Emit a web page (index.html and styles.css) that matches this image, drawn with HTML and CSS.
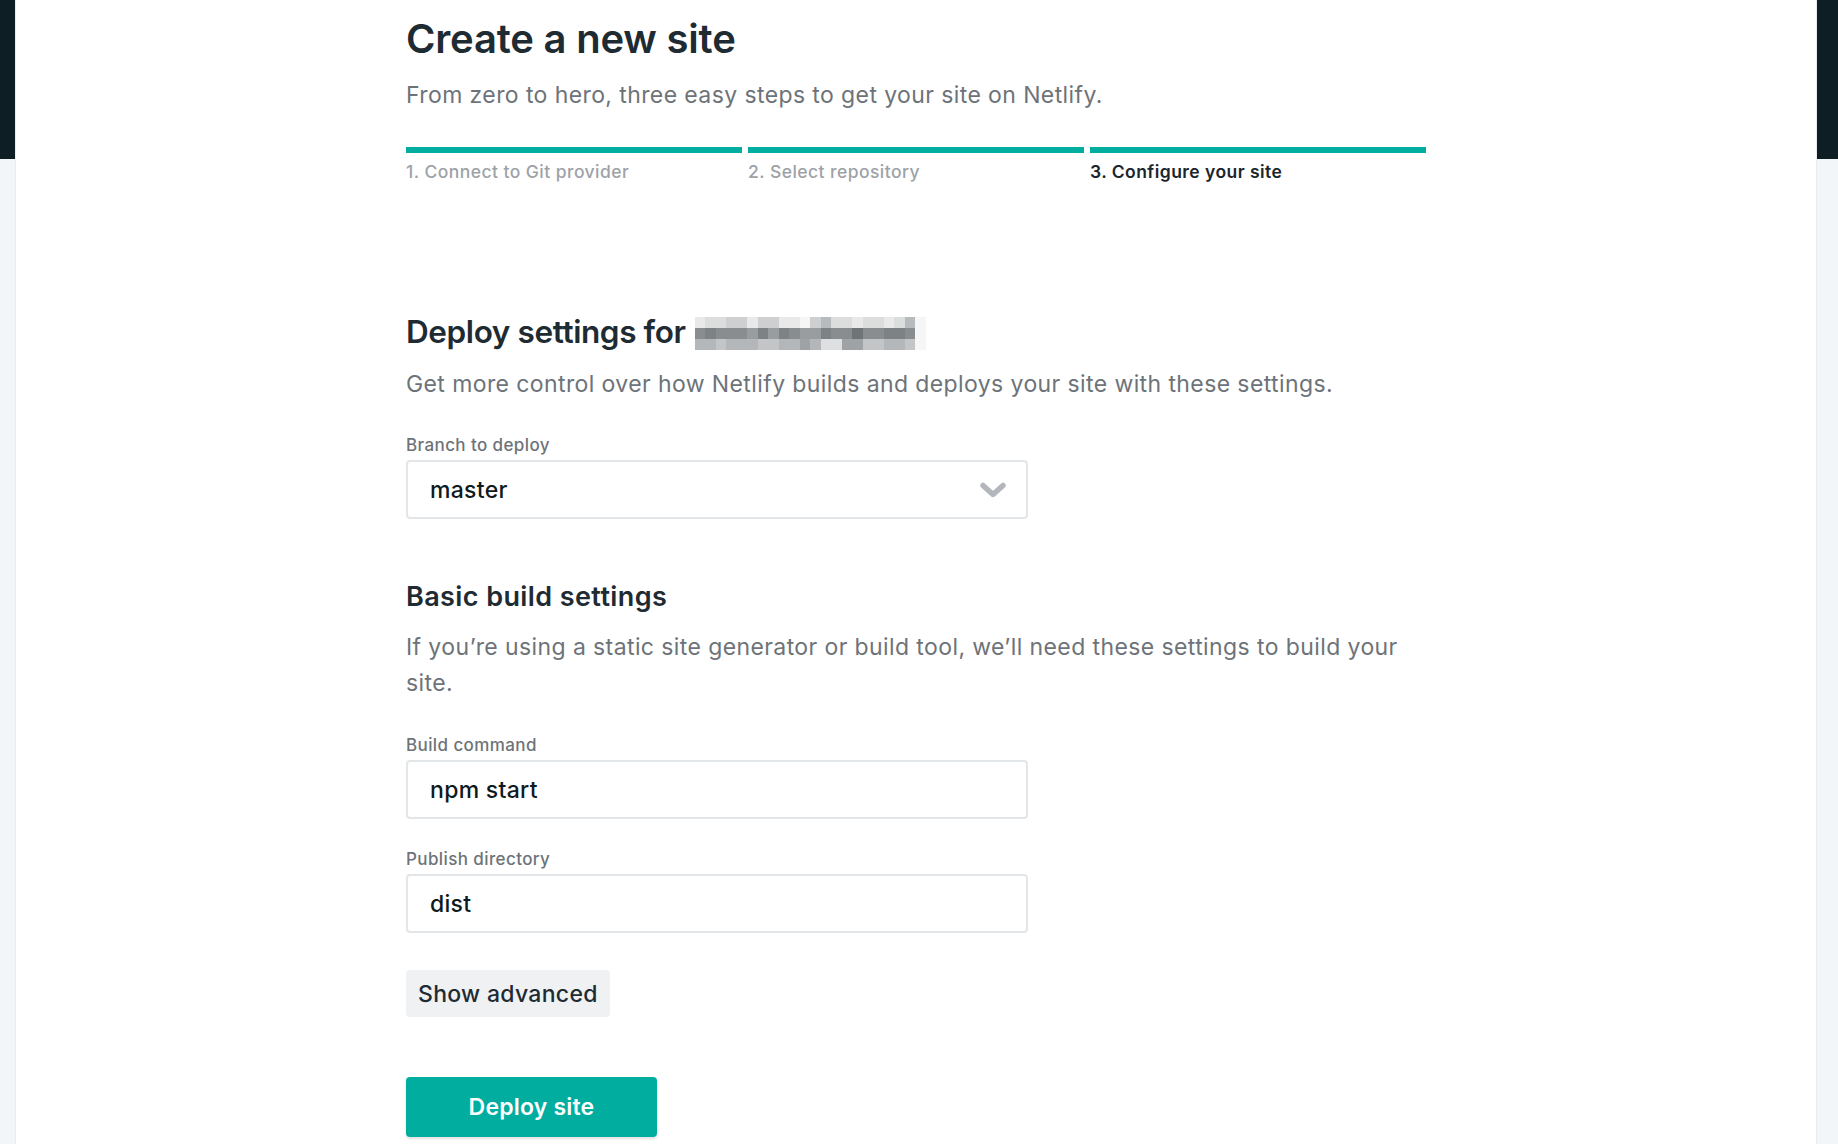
FILE: index.html
```html
<!DOCTYPE html>
<html lang="en">
<head>
<meta charset="utf-8">
<title>Create a new site</title>
<link rel="stylesheet" href="styles.css">
</head>
<body>
<div class="page">
  <div class="edge edge-left"></div>
  <main class="main">
    <div class="wrap">
      <h1 class="title">Create a new site</h1>
      <p class="lead">From zero to hero, three easy steps to get your site on Netlify.</p>

      <ol class="steps">
        <li class="step">1. Connect to Git provider</li>
        <li class="step">2. Select repository</li>
        <li class="step current">3. Configure your site</li>
      </ol>

      <section class="section deploy">
        <h2 class="h2">Deploy settings for <span class="mosaic" aria-hidden="true">
          <span class="row">
            <i class="g1"></i><i class="g2"></i><i class="g2"></i><i class="g3"></i><i class="g3"></i><i class="g1"></i><i class="g3"></i><i class="g3"></i><i class="g1"></i><i class="g1"></i><i class="g0"></i><i class="g3"></i><i class="g4"></i><i class="g2"></i><i class="g2"></i><i class="g1"></i><i class="g2"></i><i class="g2"></i><i class="g1"></i><i class="g2"></i><i class="g4"></i><i class="g0"></i>
          </span>
          <span class="row">
            <i class="d2"></i><i class="d1"></i><i class="d2"></i><i class="d2"></i><i class="d2"></i><i class="d3"></i><i class="d1"></i><i class="d3"></i><i class="d1"></i><i class="d2"></i><i class="d3"></i><i class="d3"></i><i class="d1"></i><i class="d2"></i><i class="d2"></i><i class="d0"></i><i class="d2"></i><i class="d2"></i><i class="d1"></i><i class="d1"></i><i class="d2"></i><i class="g0"></i>
          </span>
          <span class="row">
            <i class="m2"></i><i class="m2"></i><i class="m1"></i><i class="m2"></i><i class="m2"></i><i class="m2"></i><i class="m1"></i><i class="m1"></i><i class="m2"></i><i class="m2"></i><i class="m3"></i><i class="m2"></i><i class="m0"></i><i class="m0"></i><i class="m3"></i><i class="m3"></i><i class="m1"></i><i class="m1"></i><i class="m2"></i><i class="m2"></i><i class="m1"></i><i class="g0"></i>
          </span>
        </span></h2>
        <p class="desc">Get more control over how Netlify builds and deploys your site with these settings.</p>

        <div class="field">
          <label class="field-label">Branch to deploy</label>
          <div class="control select">
            <span class="value">master</span>
            <svg class="chevron" width="26" height="16" viewBox="0 0 26 16" aria-hidden="true">
              <path d="M3 3.5 L13 12.5 L23 3.5" fill="none" stroke="#b3b7bb" stroke-width="5.5" stroke-linecap="round" stroke-linejoin="round"/>
            </svg>
          </div>
        </div>
      </section>

      <section class="section build">
        <h3 class="h3">Basic build settings</h3>
        <p class="desc">If you’re using a static site generator or build tool, we’ll need these settings to build your site.</p>

        <div class="field">
          <label class="field-label">Build command</label>
          <div class="control"><span class="value">npm start</span></div>
        </div>

        <div class="field">
          <label class="field-label">Publish directory</label>
          <div class="control"><span class="value">dist</span></div>
        </div>

        <button class="btn btn-light" type="button">Show advanced</button>
      </section>

      <button class="btn btn-primary" type="button">Deploy site</button>
    </div>
  </main>
  <div class="edge edge-right"></div>
</div>
</body>
</html>
```

FILE: styles.css
```css
* { box-sizing: border-box; }

html, body {
  margin: 0;
  padding: 0;
  height: 100%;
}

body {
  font-family: Inter, "Noto Sans", "Liberation Sans", sans-serif;
  color: #1f2b33;
  background: #ffffff;
  overflow: hidden;
}

.page {
  display: flex;
  min-height: 1144px;
}

.edge {
  flex: 0 0 auto;
  background: linear-gradient(#0d1e25 0, #0d1e25 159px, #f3f6f8 159px, #f3f6f8 100%);
}

.edge-left {
  width: 16px;
  box-shadow: inset -1px 0 0 #e9edef;
}

.edge-right {
  width: 22px;
  box-shadow: inset 1px 0 0 #e9edef;
}

.main {
  flex: 1 1 auto;
  background: #ffffff;
}

.wrap {
  width: 1020px;
  margin: 0 auto;
  padding-top: 15px;
}

.title {
  margin: 0;
  font-size: 40px;
  line-height: 48px;
  font-weight: 600;
  letter-spacing: -0.2px;
  color: #1f2b33;
}

.lead {
  margin: 17px 0 0;
  font-size: 23px;
  line-height: 30px;
  letter-spacing: 0.4px;
  color: #6d7378;
  font-weight: 400;
}

.steps {
  list-style: none;
  margin: 37px 0 0;
  padding: 0;
  display: grid;
  grid-template-columns: repeat(3, 1fr);
  column-gap: 6px;
}

.step {
  border-top: 6px solid #00ad9f;
  padding-top: 8px;
  font-size: 17.5px;
  line-height: 22px;
  letter-spacing: 0.45px;
  font-weight: 500;
  color: #9da2a7;
}

.step.current {
  color: #1a252c;
  font-weight: 600;
}

.section.deploy {
  margin-top: 129px;
}

.h2 {
  margin: 0;
  display: flex;
  align-items: center;
  gap: 9px;
  font-size: 31.5px;
  line-height: 40px;
  font-weight: 600;
  letter-spacing: -0.4px;
  color: #1f2b33;
}

.mosaic {
  display: inline-flex;
  flex-direction: column;
  margin-top: 2px;
}

.mosaic .row {
  display: flex;
  height: 11px;
}

.mosaic i {
  display: block;
  width: 10.5px;
  height: 11px;
}

.g0 { background: #f6f6f6; }
.g1 { background: #e9e9ea; }
.g2 { background: #dcdddd; }
.g3 { background: #cdcfd0; }
.g4 { background: #b8bbbd; }
.d0 { background: #6f7477; }
.d1 { background: #7d8285; }
.d2 { background: #898d90; }
.d3 { background: #9a9d9f; }
.m0 { background: #dedfe0; }
.m1 { background: #c3c5c7; }
.m2 { background: #b4b7b9; }
.m3 { background: #9fa3a5; }

.desc {
  margin: 14px 0 0;
  font-size: 23px;
  line-height: 36px;
  letter-spacing: 0.4px;
  color: #6d7378;
}

.field {
  margin-top: 33px;
}

.build .field {
  margin-top: 34px;
}

.build .field + .field {
  margin-top: 30px;
}

.field-label {
  display: block;
  font-size: 17px;
  line-height: 20px;
  letter-spacing: 0.4px;
  font-weight: 500;
  color: #6d7378;
  margin-bottom: 5px;
}

.control {
  width: 622px;
  height: 59px;
  border: 2px solid #e3e6e8;
  border-radius: 4px;
  display: flex;
  align-items: center;
  justify-content: space-between;
  padding: 0 20px 0 22px;
  font-size: 23px;
  letter-spacing: 0.3px;
  color: #0f1a20;
  font-weight: 500;
}

.chevron {
  display: block;
}

.section.build {
  margin-top: 61px;
}

.h3 {
  margin: 0;
  font-size: 27px;
  line-height: 34px;
  font-weight: 600;
  color: #1f2b33;
  letter-spacing: 0.4px;
}

.build .desc {
  margin-top: 15px;
}

.btn {
  font-family: inherit;
  border: 0;
  cursor: pointer;
  display: block;
}

.btn-light {
  margin-top: 37px;
  height: 47px;
  padding: 0 12px;
  background: #eff1f3;
  color: #1f2b33;
  font-size: 23px;
  letter-spacing: 0.3px;
  font-weight: 500;
  border-radius: 4px;
}

.btn-primary {
  margin-top: 60px;
  width: 251px;
  height: 60px;
  background: #00ad9f;
  color: #ffffff;
  font-size: 23px;
  letter-spacing: 0.2px;
  font-weight: 600;
  border-radius: 4px;
  box-shadow: 0 2px 3px rgba(0, 0, 0, 0.12);
}
```
